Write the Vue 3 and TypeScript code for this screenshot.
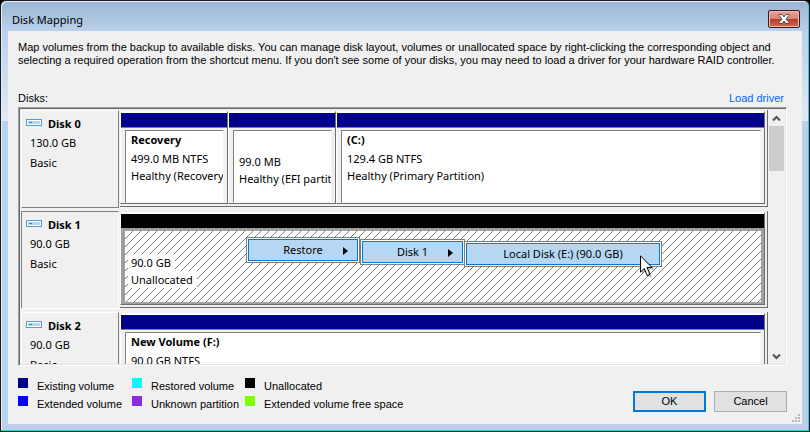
<script setup lang="ts">
interface Volume {
  name: string
  size: string
  status: string
  kind: 'existing' | 'unallocated'
  width: string
  lowered?: boolean
}

interface Disk {
  name: string
  size: string
  type: string
  selected?: boolean
  volumes: Volume[]
}

interface LegendItem {
  label: string
  tone: string
}

const disks: Disk[] = [
  {
    name: 'Disk 0',
    size: '130.0 GB',
    type: 'Basic',
    volumes: [
      { name: 'Recovery', size: '499.0 MB NTFS', status: 'Healthy (Recovery', kind: 'existing', width: '108fr' },
      { name: '', size: '99.0 MB', status: 'Healthy (EFI partition', kind: 'existing', width: '108fr', lowered: true },
      { name: '(C:)', size: '129.4 GB NTFS', status: 'Healthy (Primary Partition)', kind: 'existing', width: '429fr' },
    ],
  },
  {
    name: 'Disk 1',
    size: '90.0 GB',
    type: 'Basic',
    selected: true,
    volumes: [{ name: '', size: '90.0 GB', status: 'Unallocated', kind: 'unallocated', width: '1fr' }],
  },
  {
    name: 'Disk 2',
    size: '90.0 GB',
    type: 'Basic',
    volumes: [{ name: 'New Volume (F:)', size: '90.0 GB NTFS', status: '', kind: 'existing', width: '1fr' }],
  },
]

const legend: LegendItem[] = [
  { label: 'Existing volume', tone: 'navy' },
  { label: 'Restored volume', tone: 'cyan' },
  { label: 'Unallocated', tone: 'black' },
  { label: 'Extended volume', tone: 'blue' },
  { label: 'Unknown partition', tone: 'purple' },
  { label: 'Extended volume free space', tone: 'lime' },
]

const columns = (disk: Disk): string => disk.volumes.map((v) => `minmax(0, ${v.width})`).join(' ')
</script>

<template>
  <div class="window">
    <header class="titlebar">
      <h1 class="title">Disk Mapping</h1>
      <button class="close" type="button" aria-label="Close">
        <svg width="12" height="10" viewBox="0 0 12 10">
          <path d="M1 .5h3L6 2.8 8 .5h3v1L8 5l3 3.500v1H8L6 7.200 4 9.500H1v-1L4 5 1 1.500z" fill="#fff" stroke="#4b4d5c" stroke-width="1" />
        </svg>
      </button>
    </header>

    <main class="content">
      <p class="intro">
        Map volumes from the backup to available disks. You can manage disk layout, volumes or unallocated space by right-clicking the corresponding object and<br />
        selecting a required operation from the shortcut menu. If you don't see some of your disks, you may need to load a driver for your hardware RAID controller.
      </p>

      <div class="list-head">
        <span>Disks:</span>
        <a class="link" href="#">Load driver</a>
      </div>

      <section class="panel">
        <div class="disks">
          <div v-for="disk in disks" :key="disk.name" class="disk">
            <div class="disk-info" :class="{ pressed: disk.selected }">
              <div class="disk-name">
                <svg class="drive" width="16" height="8" viewBox="0 0 16 8">
                  <rect x=".5" y=".5" width="15" height="6" fill="#fff" stroke="#4da0cf" />
                  <rect x="2" y="2" width="12" height="3" fill="#b4d4f0" />
                  <path d="M3 3.500h3" stroke="#3d87c4" />
                </svg>
                <strong>{{ disk.name }}</strong>
              </div>
              <div class="disk-line">{{ disk.size }}</div>
              <div class="disk-line">{{ disk.type }}</div>
            </div>
            <div class="volumes" :style="{ gridTemplateColumns: columns(disk) }">
              <div v-for="(volume, i) in disk.volumes" :key="i" class="volume" :class="volume.kind">
                <div class="bar"></div>
                <div class="body">
                  <svg v-if="volume.kind === 'unallocated'" class="hatch" width="100%" height="100%">
                    <defs>
                      <pattern id="hatch" width="8" height="8" patternUnits="userSpaceOnUse">
                        <path d="M-1 9L9 -1M-1 1L1 -1M7 9L9 7" stroke="#808080" stroke-width="1" />
                      </pattern>
                    </defs>
                    <rect width="100%" height="100%" fill="url(#hatch)" />
                  </svg>
                  <div class="text" :class="{ lowered: volume.lowered }">
                    <strong class="vol-name">{{ volume.name }}</strong>
                    <span class="vol-line">{{ volume.size }}</span>
                    <span v-if="volume.status" class="vol-line">{{ volume.status }}</span>
                  </div>
                </div>
              </div>
            </div>
          </div>
        </div>
        <div class="scrollbar">
          <button class="arrow" type="button" aria-label="Scroll up">
            <svg width="9" height="7" viewBox="0 0 9 7"><path d="M1 5.500L4.500 2L8 5.500" fill="none" stroke="#505050" stroke-width="2" /></svg>
          </button>
          <div class="thumb"></div>
          <button class="arrow" type="button" aria-label="Scroll down">
            <svg width="9" height="7" viewBox="0 0 9 7"><path d="M1 1.500L4.500 5L8 1.500" fill="none" stroke="#505050" stroke-width="2" /></svg>
          </button>
        </div>
      </section>

      <footer class="footer">
        <ul class="legend">
          <li v-for="item in legend" :key="item.label" class="legend-item">
            <i class="swatch" :class="item.tone"></i>{{ item.label }}
          </li>
        </ul>
        <div class="actions">
          <button class="btn primary" type="button">OK</button>
          <button class="btn" type="button">Cancel</button>
        </div>
      </footer>
      <svg class="grip" width="9" height="9" viewBox="0 0 9 9">
        <path d="M6 0h2v2h-2zM3 3h2v2h-2zM6 3h2v2h-2zM0 6h2v2h-2zM3 6h2v2h-2zM6 6h2v2h-2z" fill="#b8b8b8" />
      </svg>
    </main>

    <div class="menu restore">
      <button class="menu-item" type="button">
        Restore
        <svg class="sub" width="5" height="8" viewBox="0 0 5 8"><path d="M0 0l5 4-5 4z" fill="#000" /></svg>
      </button>
    </div>
    <div class="menu target-disk">
      <button class="menu-item" type="button">
        Disk 1
        <svg class="sub" width="5" height="8" viewBox="0 0 5 8"><path d="M0 0l5 4-5 4z" fill="#000" /></svg>
      </button>
    </div>
    <div class="menu target-volume">
      <button class="menu-item" type="button">Local Disk (E:) (90.0 GB)</button>
    </div>
    <svg class="cursor" width="16" height="24" viewBox="0 0 16 24">
      <path d="M2 2.500v17l4-4 3 7 3-1.300-3-6.700h6z" fill="#000" opacity=".25" />
      <path d="M.5.8v16.400l3.800-3.600 2.900 6.900 2.700-1.200L7 12.500h5z" fill="#fff" stroke="#000" />
    </svg>
  </div>
</template>

<style>
body {
  margin: 0;
  background: #000;
}
</style>

<style scoped>
* {
  box-sizing: border-box;
}

.window {
  position: relative;
  display: flex;
  flex-direction: column;
  height: 100vh;
  padding: 0 6px 6px;
  border: 1px solid #1a1a22;
  border-radius: 6px 6px 0 0;
  background: linear-gradient(#9ab4d1 0, #b9d1ea 30px, #dfeaf6 120px, #b9d1ea 120px);
  box-shadow: inset -1px -1px 0 #3fc8e0, inset 1px 1px 0 #e4eef8;
  color: #000;
  font-family: "Liberation Sans", Arial, sans-serif;
  font-size: 11px;
  line-height: 13px;
}

.titlebar {
  display: flex;
  justify-content: space-between;
  align-items: flex-start;
  flex: none;
  height: 30px;
  padding: 9px 3px 0 5px;
}

.title {
  margin: 2px 0 0;
  font: 400 11px/16px "Noto Sans", sans-serif;
}

.close {
  display: flex;
  align-items: center;
  justify-content: center;
  width: 32px;
  height: 18px;
  padding: 0;
  border: 1px solid #431422;
  border-radius: 2px;
  background: linear-gradient(#e6a698 0, #d58472 8px, #b93a24 8px, #cf6b50 100%);
  box-shadow: inset 0 0 0 1px #eebbb0;
}

.content {
  position: relative;
  display: flex;
  flex-direction: column;
  flex: 1;
  min-height: 0;
  margin: 0 1px 1px;
  padding: 10px 15px 12px 10px;
  background: #f0f0f0;
}

.intro {
  margin: 0;
  white-space: nowrap;
}

.list-head {
  display: flex;
  justify-content: space-between;
  flex: none;
  padding: 25px 3px 2px 0;
}

.link {
  color: #0066ff;
  text-decoration: none;
}

.panel {
  display: flex;
  flex: 1;
  min-height: 0;
  overflow: hidden;
  border: 1px solid;
  border-color: #a0a0a0 #fff #fff #a0a0a0;
  padding: 2px 2px 1px 2px;
  background: #f0f0f0;
  box-shadow: inset 1px 1px 0 #696969, inset -1px -1px 0 #e3e3e3;
}

.disks {
  display: flex;
  flex-direction: column;
  gap: 3px;
  flex: 1;
  min-width: 0;
  overflow: hidden;
  font-family: "Noto Sans", sans-serif;
  font-size: 11px;
  line-height: 17px;
}

.disk {
  display: flex;
  flex: none;
  gap: 1px;
  height: 98px;
}

.disk-info {
  flex: none;
  width: 98px;
  padding: 2px 4px 0;
  border: 1px solid;
  border-color: #fff #808080 #808080 #fff;
}

.disk-info.pressed {
  border-color: #808080 #fff #fff #808080;
}

.disk-name {
  display: flex;
  align-items: center;
  gap: 6px;
  height: 20px;
}

.disk-line {
  padding-left: 4px;
  line-height: 20px;
}

.volumes {
  display: grid;
  flex: 1;
  min-width: 0;
  height: 97px;
  padding: 1px 2px 2px 0;
  border: solid #6d6d6d;
  border-width: 0 1px 1px 0;
  background: #f0f0f0;
}

.volume {
  display: flex;
  flex-direction: column;
  min-width: 0;
  border: 1px solid;
  border-color: #fff #6d6d6d #6d6d6d #fff;
}

.bar {
  flex: none;
  height: 15px;
  border-top: 1px solid #fff;
  background: #00008b;
}

.unallocated .bar {
  background: #000;
}

.body {
  position: relative;
  flex: 1;
  min-height: 0;
  margin: 2px 3px 0 4px;
  overflow: hidden;
  border: 1px solid;
  border-color: #808080 #f5f5f5 #f5f5f5 #808080;
  background: #fff;
}

.existing .bar {
  border-bottom: 1px solid #808080;
  height: 16px;
}

.unallocated .body {
  margin: 0;
  border: solid #a0a0a0;
  border-width: 3px 3px 2px 4px;
}

.hatch {
  position: absolute;
  inset: 0;
}

.text {
  position: relative;
  display: flex;
  flex-direction: column;
  align-items: flex-start;
  padding-left: 5px;
  white-space: nowrap;
}

.text.lowered {
  padding-top: 3px;
}

.vol-name {
  height: 19px;
  line-height: 18px;
}

.vol-line {
  max-width: 100%;
  overflow: hidden;
}

.unallocated .text {
  padding: 4px 0 0 3px;
}

.unallocated .vol-line {
  padding: 0 4px 0 3px;
  background: #fff;
}

.scrollbar {
  display: flex;
  flex-direction: column;
  flex: none;
  width: 15px;
  margin-left: 1px;
}

.arrow {
  display: flex;
  align-items: center;
  justify-content: center;
  height: 16px;
  padding: 0;
  border: 0;
  background: none;
}

.thumb {
  height: 45px;
  margin-bottom: auto;
  background: #cdcdcd;
}

.footer {
  display: flex;
  justify-content: space-between;
  align-items: flex-end;
  flex: none;
  padding-top: 12px;
}

.legend {
  display: grid;
  grid-template-columns: 114px 113px auto;
  row-gap: 2px;
  margin: 0;
  padding: 0;
  list-style: none;
  line-height: 16px;
}

.legend-item {
  display: flex;
  gap: 9px;
  white-space: nowrap;
}

.swatch {
  flex: none;
  width: 10px;
  height: 10px;
}

.navy { background: #00008b; }
.cyan { background: #00ffff; }
.black { background: #000; }
.blue { background: #0000ff; }
.purple { background: #8a2be2; }
.lime { background: #7fff00; }

.actions {
  display: flex;
  gap: 8px;
}

.btn {
  width: 73px;
  height: 21px;
  padding: 0;
  border: 1px solid #adadad;
  background: #e1e1e1;
  color: #000;
  font: inherit;
}

.btn.primary {
  border: 2px solid #0078d7;
}

.grip {
  position: absolute;
  right: 1px;
  bottom: 1px;
}

.menu {
  position: absolute;
  height: 26px;
  padding: 1px;
  border: 1px solid #808080;
  background: #fff;
}

.restore {
  left: 245px;
  top: 236px;
  width: 114px;
}

.target-disk {
  left: 359px;
  top: 238px;
  width: 105px;
}

.target-volume {
  left: 463px;
  top: 240px;
  width: 198px;
}

.menu-item {
  position: relative;
  display: block;
  width: 100%;
  height: 100%;
  padding: 0;
  border: 1px solid #0078d7;
  background: #b5d7f3;
  color: #000;
  font: 11px/18px "Noto Sans", sans-serif;
}

.sub {
  position: absolute;
  right: 9px;
  top: 7px;
}

.cursor {
  position: absolute;
  left: 639px;
  top: 254px;
}
</style>
